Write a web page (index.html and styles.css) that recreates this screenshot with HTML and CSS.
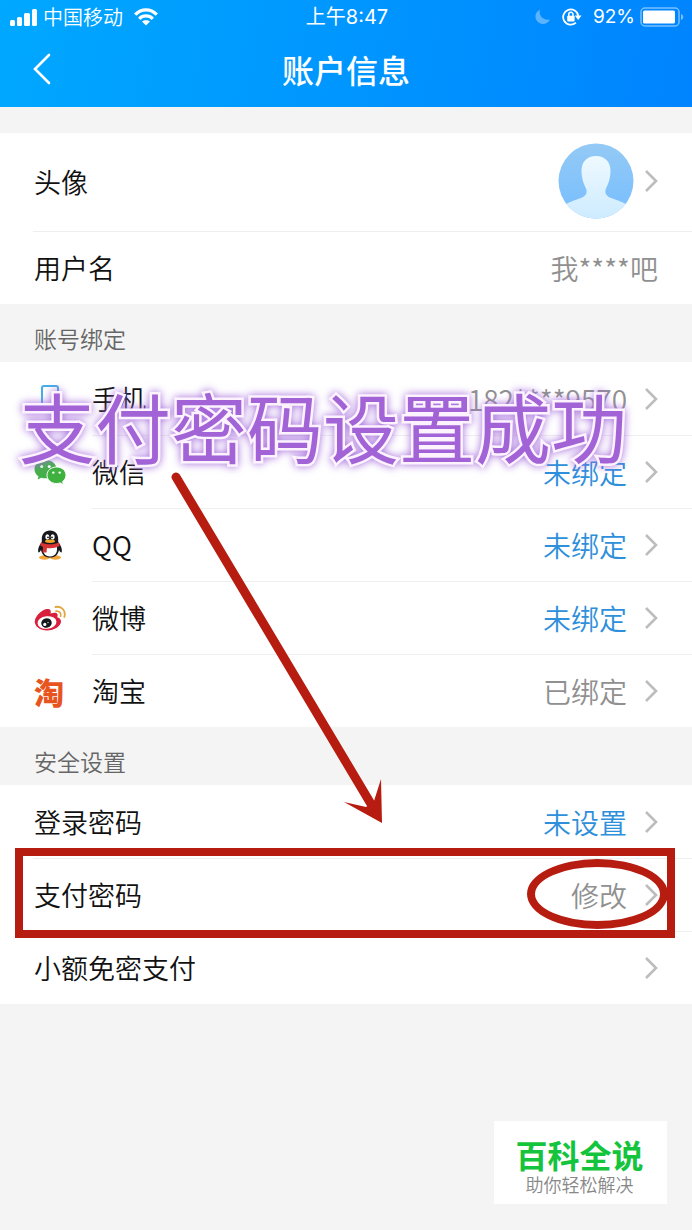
FILE: index.html
```html
<!DOCTYPE html>
<html lang="zh-CN">
<head>
    <meta charset="UTF-8">
    <meta name="viewport" content="width=device-width, initial-scale=1.0">
    <title>账户信息</title>
    <link rel="stylesheet" href="styles.css">
</head>
<body>
    <svg class="defs" width="0" height="0" aria-hidden="true">
        <symbol id="chevron" viewBox="0 0 14 24">
            <path d="M2 2 L12 12 L2 22" fill="none" stroke="#bdbdbd" stroke-width="2.6"/>
        </symbol>
    </svg>

    <header class="header">
        <div class="status-bar">
            <div class="status-left">
                <svg width="28" height="18" viewBox="0 0 28 18" fill="#fff">
                    <rect x="0" y="12" width="5" height="6" rx="1.5"/>
                    <rect x="7" y="9" width="5" height="9" rx="1.5"/>
                    <rect x="14" y="5" width="6" height="13" rx="1.5"/>
                    <rect x="22" y="1" width="5" height="17" rx="1.5"/>
                </svg>
                <span class="carrier">中国移动</span>
                <svg width="24" height="18" viewBox="0 0 24 18" fill="none" stroke="#fff" stroke-width="3.2">
                    <path d="M1.2 6.6 C7.4 0.2 16.6 0.2 22.8 6.6"/>
                    <path d="M5.2 10.8 C9 7 15 7 18.8 10.8"/>
                    <path d="M12 17.5 L8 13.6 C10.2 11.8 13.8 11.8 16 13.6 Z" fill="#fff" stroke="none"/>
                </svg>
            </div>
            <span class="clock">上午8:47</span>
            <div class="status-right">
                <svg width="16" height="16" viewBox="0 0 16 16" fill="#5cb4ff">
                    <path d="M5 0.8 C3.4 7 8.5 12 15.2 10.4 C13 14.2 8.4 16.2 4.4 14 C-1.4 10.8 -0.6 3.2 5 0.8 Z"/>
                </svg>
                <svg class="lock-icon" width="20" height="18" viewBox="0 0 20 18">
                    <path d="M13.9 14.7 A7.6 7.6 0 1 1 16.3 8" fill="none" stroke="#fff" stroke-width="1.8"/>
                    <path d="M12.8 7.6 H19.6 L16.2 12 Z" fill="#fff"/>
                    <rect x="5.2" y="7.8" width="7.4" height="5.6" rx="0.8" fill="#fff"/>
                    <path d="M6.8 8 V6.4 A2.1 2.1 0 0 1 11 6.4 V8" fill="none" stroke="#fff" stroke-width="1.5"/>
                </svg>
                <span class="battery-text">92%</span>
                <svg width="44" height="20" viewBox="0 0 44 20">
                    <rect x="1" y="1" width="38" height="18" rx="4" fill="none" stroke="#77c0ff" stroke-width="1.5"/>
                    <rect x="3" y="3.4" width="32" height="13" rx="1.5" fill="#fff"/>
                    <path d="M41 7 C44 8 44 12 41 13 Z" fill="#77c0ff"/>
                </svg>
            </div>
        </div>
        <div class="nav-bar">
            <button class="back" type="button" aria-label="返回">
                <svg width="20" height="32" viewBox="0 0 20 32" fill="none" stroke="#fff" stroke-width="2.6" stroke-linecap="round">
                    <path d="M17 2 L3 16 L17 30"/>
                </svg>
            </button>
            <h1 class="title">账户信息</h1>
        </div>
    </header>

    <main class="content">
        <ul class="list">
            <li><a class="row row-avatar" href="#">
                <span class="label">头像</span>
                <svg class="avatar" width="76" height="76" viewBox="0 0 76 76">
                    <defs>
                        <linearGradient id="sky" x1="0" y1="0" x2="0" y2="1">
                            <stop offset="0" stop-color="#94caf5"/>
                            <stop offset="1" stop-color="#76bdff"/>
                        </linearGradient>
                        <linearGradient id="person" x1="0" y1="0" x2="0" y2="1">
                            <stop offset="0" stop-color="#eef9ff"/>
                            <stop offset="1" stop-color="#cdebff"/>
                        </linearGradient>
                        <clipPath id="round"><circle cx="38" cy="38" r="37.5"/></clipPath>
                    </defs>
                    <g clip-path="url(#round)">
                        <rect width="76" height="76" fill="url(#sky)"/>
                        <path d="M38 13 C47 13 53 19 52.500 29 C52 38 49.500 42 47.800 46 C46.500 50 48 53 53 55 C61 58 66 59 70 63 V76 H6 V63 C10 59 15 58 23 55 C28 53 29.500 50 28.200 46 C26.500 42 24 38 23.500 29 C23 19 29 13 38 13 Z" fill="url(#person)"/>
                    </g>
                </svg>
                <svg class="chevron"><use href="#chevron"/></svg>
            </a></li>
            <li class="row">
                <span class="label">用户名</span>
                <span class="value">我****吧</span>
            </li>
        </ul>

        <h2 class="section-title">账号绑定</h2>
        <ul class="list list-icons">
            <li><a class="row" href="#">
                <svg class="icon" width="32" height="32" viewBox="0 0 32 32" fill="none" stroke-width="2">
                    <path d="M8 29 V5 Q8 3 10 3 H22 Q24 3 24 5 V29 Z" stroke="#45aee6"/>
                    <path d="M8 25 H24" stroke="#45aee6"/>
                </svg>
                <span class="label">手机</span>
                <span class="value">182****9570</span>
                <svg class="chevron"><use href="#chevron"/></svg>
            </a></li>
            <li><a class="row" href="#">
                <svg class="icon" width="32" height="32" viewBox="0 0 32 32">
                    <path d="M11.500 4 C5 4 0.500 8 0.500 13.200 C0.500 16.200 2 18.700 4.500 20.400 L3.600 23.600 L7.400 21.700 C8.700 22.100 10 22.300 11.500 22.300 C18 22.300 22.500 18.300 22.500 13.200 C22.500 8 18 4 11.500 4 Z" fill="#45b04b"/>
                    <circle cx="7.700" cy="10.500" r="1.500" fill="#fff"/>
                    <circle cx="15.200" cy="10.500" r="1.500" fill="#fff"/>
                    <path d="M22.500 11 C17 11 13 14.600 13 19.200 C13 23.800 17 27.500 22.500 27.500 C23.800 27.500 25 27.300 26.100 26.900 L29.400 28.600 L28.600 25.600 C30.700 24.100 32 21.800 32 19.200 C32 14.600 28 11 22.500 11 Z" fill="#3fb13f" stroke="#fff" stroke-width="1"/>
                    <circle cx="19.300" cy="16.600" r="1.200" fill="#fff"/>
                    <circle cx="25.700" cy="16.600" r="1.200" fill="#fff"/>
                </svg>
                <span class="label">微信</span>
                <span class="value blue">未绑定</span>
                <svg class="chevron"><use href="#chevron"/></svg>
            </a></li>
            <li><a class="row" href="#">
                <svg class="icon" width="32" height="32" viewBox="0 0 32 32">
                    <ellipse cx="10.500" cy="28.500" rx="5.500" ry="2.200" fill="#f2a63a"/>
                    <ellipse cx="21.500" cy="28.500" rx="5.500" ry="2.200" fill="#f2a63a"/>
                    <path d="M16 1.500 C10.500 1.500 7.800 5.500 7.800 10 V13 C5.500 16 3.600 19.500 4.200 22.800 C4.600 24.400 6 23 7 21 C8 26 11 28.500 16 28.500 C21 28.500 24 26 25 21 C26 23 27.400 24.400 27.800 22.800 C28.400 19.500 26.500 16 24.200 13 V10 C24.200 5.500 21.500 1.500 16 1.500 Z" fill="#17191c"/>
                    <path d="M9.500 16.500 C7.800 22 10 27.500 16 27.500 C22 27.500 24.200 22 22.500 16.500 Z" fill="#fff"/>
                    <ellipse cx="13.300" cy="8" rx="2" ry="2.700" fill="#fff"/>
                    <ellipse cx="18.700" cy="8" rx="2" ry="2.700" fill="#fff"/>
                    <circle cx="14" cy="8.300" r="0.900" fill="#111"/>
                    <circle cx="18" cy="8.300" r="0.900" fill="#111"/>
                    <ellipse cx="16" cy="12.300" rx="5" ry="1.700" fill="#f5a52c"/>
                    <path d="M7 13.200 C12 16 20 16 25 13.200 L25.600 16.800 C21 19.400 17 19.600 13 19 L12.500 23.500 H8.600 L9.100 18 L6.200 16.500 Z" fill="#d93434"/>
                </svg>
                <span class="label">QQ</span>
                <span class="value blue">未绑定</span>
                <svg class="chevron"><use href="#chevron"/></svg>
            </a></li>
            <li><a class="row" href="#">
                <svg class="icon" width="32" height="32" viewBox="0 0 32 32">
                    <path d="M12.500 7 C8 8 1.500 13.500 0.800 19 C0.300 24.500 6.500 28.500 13 28.500 C20.500 28.500 27 24.200 27 19.600 C27 17.200 25.400 15.800 23.200 15.200 C24.700 11.500 22.500 9.500 16.500 11.600 C17.500 8.500 16.200 6.500 12.500 7 Z" fill="#d8203d"/>
                    <ellipse cx="13" cy="20.500" rx="9.500" ry="6.300" transform="rotate(-6 13 20.500)" fill="#fff"/>
                    <ellipse cx="12.500" cy="21" rx="5.300" ry="4.700" transform="rotate(-15 12.500 21)" fill="#15161a"/>
                    <circle cx="10.800" cy="22.400" r="1.600" fill="#fff"/>
                    <circle cx="14" cy="20.600" r="0.700" fill="#fff"/>
                    <path d="M22 9.200 C25.500 8.800 27.600 11.300 26.600 14.300" fill="none" stroke="#e0a53c" stroke-width="1.700" stroke-linecap="round"/>
                    <path d="M21.500 5 C27.800 3.700 32.300 9 30.300 15" fill="none" stroke="#e0a53c" stroke-width="1.800" stroke-linecap="round"/>
                </svg>
                <span class="label">微博</span>
                <span class="value blue">未绑定</span>
                <svg class="chevron"><use href="#chevron"/></svg>
            </a></li>
            <li><a class="row" href="#">
                <span class="icon taobao">淘</span>
                <span class="label">淘宝</span>
                <span class="value">已绑定</span>
                <svg class="chevron"><use href="#chevron"/></svg>
            </a></li>
        </ul>

        <h2 class="section-title">安全设置</h2>
        <ul class="list">
            <li><a class="row" href="#">
                <span class="label">登录密码</span>
                <span class="value blue">未设置</span>
                <svg class="chevron"><use href="#chevron"/></svg>
            </a></li>
            <li><a class="row row-marked" href="#">
                <span class="label">支付密码</span>
                <span class="value">修改</span>
                <svg class="chevron"><use href="#chevron"/></svg>
            </a></li>
            <li><a class="row" href="#">
                <span class="label">小额免密支付</span>
                <svg class="chevron"><use href="#chevron"/></svg>
            </a></li>
        </ul>
    </main>

    <!-- annotations on top of the screen -->
    <p class="callout">支付密码设置成功</p>
    <svg class="arrow" width="212" height="354" viewBox="0 0 212 354">
        <path d="M5 7 L200 334" stroke="#b71c10" stroke-width="9" stroke-linecap="round"/>
        <path d="M211 353 L173 332 L195 337 L203 331 L210 309 Z" fill="#b71c10"/>
    </svg>
    <div class="watermark">
        <strong class="watermark-name">百科全说</strong>
        <span class="watermark-text">助你轻松解决</span>
    </div>
</body>
</html>
```
FILE: styles.css
```css
*,
*::before,
*::after {
    box-sizing: border-box;
}

body {
    margin: 0;
    position: relative;
    min-height: 100vh;
    background-color: #f4f4f4;
    color: #111;
    font-family: "Noto Sans CJK SC", sans-serif;
}

.defs {
    position: absolute;
}

.header {
    background: linear-gradient(100deg, #00a8ff, #0084ff);
    color: white;
}

.status-bar {
    display: grid;
    grid-template-columns: 1fr auto 1fr;
    align-items: center;
    height: 34px;
    padding: 0 8px 0 10px;
    font-size: 20px;
    line-height: 34px;
}

.status-left,
.status-right {
    display: flex;
    align-items: center;
}

.status-right {
    justify-content: flex-end;
}

.carrier {
    margin: 0 11px 0 5px;
    font-weight: 350;
}

.clock,
.battery-text {
    font-family: Inter, "Noto Sans CJK SC", sans-serif;
}

.lock-icon {
    margin: 0 11px;
}

.battery-text {
    margin-right: 5px;
    font-size: 19px;
}

.nav-bar {
    display: grid;
    grid-template-columns: 1fr auto 1fr;
    align-items: center;
    height: 73px;
    padding: 0 32px 3px;
}

.back {
    display: flex;
    width: 40px;
    padding: 0;
    border: none;
    background: none;
}

.title {
    margin: 0;
    font-size: 32px;
    font-weight: 500;
    line-height: 70px;
}

.content {
    padding-top: 26px;
}

.list {
    margin: 0;
    padding: 0;
    list-style: none;
    background-color: white;
}

.row {
    position: relative;
    display: flex;
    align-items: center;
    height: 73px;
    padding: 0 34px;
    color: inherit;
    text-decoration: none;
}

.row-avatar {
    height: 98px;
    padding-bottom: 2px;
}

/* divider starts at the label, not at the screen edge */
.list li + .row::before,
.list li + li .row::before {
    content: "";
    position: absolute;
    top: 0;
    left: 33px;
    right: 0;
    border-top: 1px solid #efefef;
}

.list-icons li + li .row::before {
    left: 92px;
}

.icon {
    width: 32px;
    margin-right: 26px;
}

.taobao {
    color: #e8541e;
    font-size: 30px;
    font-weight: 900;
}

.label {
    flex-grow: 1;
    font-size: 27px;
    font-weight: 350;
}

.value {
    color: #909090;
    font-size: 28px;
    font-weight: 350;
    line-height: 40px;
}

.blue {
    color: #2e8fdb;
}

.chevron {
    width: 14px;
    height: 24px;
    margin-left: 17px;
}

.avatar {
    margin-right: -7px;
}

.section-title {
    height: 58px;
    margin: 0;
    padding: 5px 0 0 34px;
    color: #666;
    font-size: 23px;
    font-weight: 350;
    line-height: 58px;
}

.row-marked {
    z-index: 1;
}

.row-marked::after {
    content: "";
    position: absolute;
    top: -10px;
    bottom: -7px;
    left: 15px;
    right: 17px;
    border: 8px solid #b71c10;
}

.row-marked .value::after {
    content: "";
    position: absolute;
    top: 1px;
    right: 24px;
    width: 141px;
    height: 70px;
    border: 8px solid #b71c10;
    border-radius: 50%;
}

.callout {
    position: absolute;
    z-index: 1;
    top: 370px;
    left: 19px;
    margin: 0;
    color: #a263d6;
    font-size: 76px;
    line-height: 110px;
    white-space: nowrap;
    -webkit-text-stroke: 5px #fdf3ff;
    paint-order: stroke fill;
    filter: drop-shadow(0 0 4px #a46bdc);
}

.arrow {
    position: absolute;
    top: 470px;
    left: 171px;
}

.watermark {
    position: absolute;
    right: 25px;
    bottom: 26px;
    display: flex;
    flex-direction: column;
    align-items: center;
    width: 173px;
    height: 83px;
    padding: 14px 2px 0 0;
    background-color: white;
}

.watermark-name {
    color: #14c43c;
    font-size: 32px;
    line-height: 38px;
}

.watermark-text {
    color: #888;
    font-size: 18px;
    font-weight: 350;
    line-height: 22px;
}
```
